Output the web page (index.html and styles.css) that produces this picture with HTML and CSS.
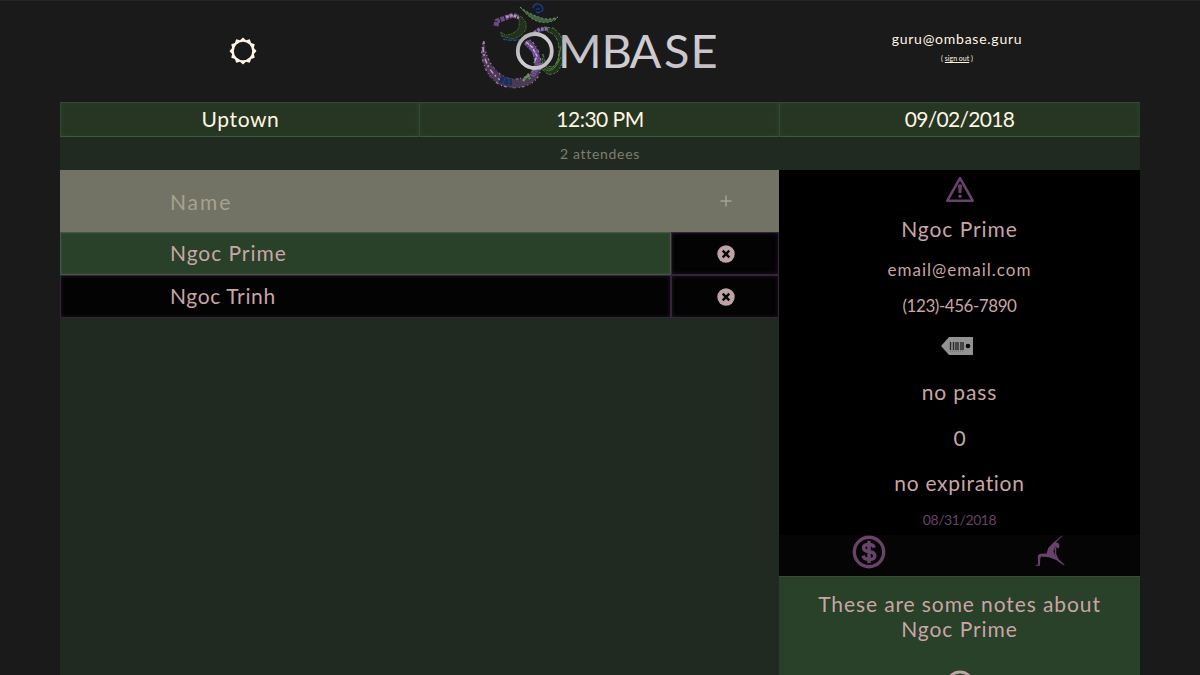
FILE: index.html
```html
<!DOCTYPE html>
<html lang="en">
<head>
<meta charset="utf-8">
<title>Ombase</title>
<link rel="stylesheet" href="styles.css">
</head>
<body>
<header class="top">
  <div class="settings">
    <svg width="28" height="28" viewBox="0 0 28 28"><g fill="#fff5e3"><path d="M14 .5 17 3.2 20.8 2.3 22.1 5.9 25.7 7.2 24.9 11 27.5 14 24.9 17 25.7 20.8 22.1 22.1 20.8 25.7 17 24.8 14 27.5 11 24.8 7.2 25.7 5.9 22.1 2.3 20.8 3.1 17 .5 14 3.1 11 2.3 7.2 5.9 5.9 7.2 2.3 11 3.2Z"/></g><circle cx="14" cy="14" r="9.2" fill="#1a1a1a"/></svg>
  </div>
  <div class="brand">
    <svg width="240" height="92" viewBox="480 0 240 92">
      <defs>
        <linearGradient id="metal" x1="0" y1="0" x2="1" y2="1"><stop offset="0" stop-color="#aaa8ac"/><stop offset=".5" stop-color="#d3d0d5"/><stop offset="1" stop-color="#bcb8c0"/></linearGradient>
        <g id="bowl"><path d="M484 41Q485 53 489 60Q495 73 507 78Q519 81 529 75Q537 69 535 60Q533 48 524 42L531 40Q540 50 541 62Q542 78 530 84Q516 91 500 85Q484 75 482 55Q481 47 484 41Z"/></g>
        <g id="loop"><path d="M517 15L522 17L526 23L526 29Q522 37 512 39L501 36L501 32L505 35Q513 35 518 29Q521 22 517 15Z"/></g>
        <g id="tail"><path d="M544 27L553 28Q564 35 564 51Q564 64 557 72Q547 78 542 68L543 54L545 61Q549 70 555 65Q561 55 558 42Q555 33 548 32Z"/></g>
      </defs>
      <g fill="#6b5079" opacity=".6"><use href="#bowl"/></g>
      <g fill="none" stroke-width="1.2">
        <g stroke="#a57fa9" stroke-dasharray="3 2 1 3"><use href="#bowl"/></g>
        <g stroke="#2f2345" stroke-dasharray="2 5 1 3" stroke-dashoffset="2"><use href="#bowl"/></g>
      </g>
      <g fill="#24371f" opacity=".8"><use href="#loop"/><use href="#tail"/></g>
      <g fill="none" stroke-width=".9">
        <g stroke="#5b9140" stroke-dasharray="3 1 2 2"><use href="#tail"/></g>
        <g stroke="#507c35" stroke-dasharray="2 1 1 1"><use href="#loop"/></g>
      </g>
      <path d="M483 47Q484 67 500 80" fill="none" stroke="#c18fc1" stroke-width="1.6" stroke-dasharray="5 2 2 3"/>
      <path d="M496 26 497 21 505 18 513 15 518 17" fill="none" stroke="#6d4a82" stroke-width="5" stroke-dasharray="4 1 3 1"/>
      <path d="M506 17 513 15 519 18" fill="none" stroke="#ae94bf" stroke-width="2.5" stroke-dasharray="3 1"/>
      <path d="M503 39Q519 43 535 34L546 29" fill="none" stroke="#234779" stroke-width="1.6" stroke-dasharray="4 1"/>
      <path d="M534 33 540 29 548 29" fill="none" stroke="#8e6cab" stroke-width="3.6" stroke-dasharray="3 1"/>
      <path d="M526 42 535 51 538 64 532 76" fill="none" stroke="#725095" stroke-width="6" stroke-dasharray="3 .6 2 .7"/>
      <path d="M526 42 532 47 537 56 534 63" fill="none" stroke="#cbb3d3" stroke-width="1.3" stroke-dasharray="4 1"/>
      <path d="M500 79 508 82 512 82" fill="none" stroke="#172f5d" stroke-width="7" stroke-dasharray="4 1"/>
      <path d="M490 66 499 76M512 83 519 81 531 79" fill="none" stroke="#4a345c" stroke-width="3" stroke-dasharray="1.5 2"/>
      <path d="M523 81 528 75 530 79M532 70 537 67 541 70" fill="none" stroke="#66985a" stroke-width="2.4" stroke-dasharray="3 .6"/>
      <path d="M520 7Q529 14 539 17Q547 21 558 17L555 20Q543 26 531 18Q525 13 520 7Z" fill="#3f6240" stroke="#87a681" stroke-width=".8" stroke-dasharray="2 2"/>
      <circle cx="538" cy="9" r="5.3" fill="#101b38"/>
      <path d="M533 8Q534 3.5 538 4Q543 5 543 10Q540 14 536 12M536 9H540" fill="none" stroke="#244379" stroke-width="1.2"/>
      <path d="M545 65Q550 75 558 61L561 46M544 69Q553 76 561 57" fill="none" stroke="#5e963f" stroke-width=".7"/>
      <circle cx="534.8" cy="51" r="17" fill="none" stroke="url(#metal)" stroke-width="3.8"/>
      <text class="wordmark" x="558 601.5 629.5 664 690.5" y="68" fill="url(#metal)">MBASE</text>
    </svg>
  </div>
  <div class="account"><div class="user">guru@ombase.guru</div><div class="signout">( <a>sign out</a> )</div></div>
</header>
<main class="board">
  <div class="session"><div><span class="place">Uptown</span></div><div><span class="time">12:30 PM</span></div><div><span class="date">09/02/2018</span></div></div>
  <div class="count">2 attendees</div>
  <div class="content">
    <section class="list">
      <div class="row search"><div class="name"><span class="label">Name</span></div><div class="action"><svg width="12" height="12" viewBox="0 0 12 12"><path d="M6 .5V11.5M.5 6H11.5" stroke="#a4a38f" stroke-width="1.5"/></svg></div></div>
      <div class="row person active"><div class="name"><span class="prime">Ngoc Prime</span></div><div class="action"><svg width="18" height="18" viewBox="0 0 18 18"><circle cx="9" cy="9" r="8.7" fill="#bda3a5"/><path d="M5.7 5.7 12.3 12.3M12.3 5.7 5.7 12.3" stroke="#050505" stroke-width="2.4"/></svg></div></div>
      <div class="row person"><div class="name"><span class="trinh">Ngoc Trinh</span></div><div class="action"><svg width="18" height="18" viewBox="0 0 18 18"><circle cx="9" cy="9" r="8.7" fill="#bda3a5"/><path d="M5.7 5.7 12.3 12.3M12.3 5.7 5.7 12.3" stroke="#050505" stroke-width="2.4"/></svg></div></div>
    </section>
    <aside class="detail">
      <div class="profile">
        <div class="warning"><svg width="30" height="27" viewBox="0 0 30 27"><path d="M15 2.2 27.7 24.7H2.3Z" fill="none" stroke="#684269" stroke-width="2.6" stroke-linejoin="round"/><path d="M13 9Q15 7.5 17 9L16.4 17H13.6Z" fill="#684269"/><circle cx="15" cy="20.2" r="1.8" fill="#684269"/></svg></div>
        <div class="line fullname"><span class="prime">Ngoc Prime</span></div>
        <div class="line email"><span>email@email.com</span></div>
        <div class="line phone"><span>(123)-456-7890</span></div>
        <div class="tag"><svg width="32" height="18" viewBox="0 0 32 18"><path d="M0 9 8 0H32V18H8Z" fill="#929292"/><path d="M9.5 5V13M12.5 5V13M15 5V13M17 5V13M20 5V13M22 5V13" stroke="#292929" stroke-width="1.4"/><path d="M9 14H22" stroke="#666" stroke-dasharray="1 1"/><circle cx="27" cy="9" r="2.3" fill="#080808"/></svg></div>
        <div class="line pass"><span>no pass</span></div>
        <div class="line zero"><span>0</span></div>
        <div class="line expiry"><span>no expiration</span></div>
        <div class="line visited"><span>08/31/2018</span></div>
      </div>
      <div class="tools">
        <div><svg width="34" height="34" viewBox="0 0 34 34"><circle cx="17" cy="17" r="14.7" fill="none" stroke="#684269" stroke-width="3.4"/><path d="M22.3 12.6Q21.5 9.5 17 9.5C9.8 9.5 9.8 15.5 17 16.6C25 17.8 24.5 24.5 17 24.5Q11.9 24.5 11.1 20.7M17 5.8V28.2" fill="none" stroke="#684269" stroke-width="3.5"/></svg></div>
        <div><svg width="30" height="32" viewBox="0 0 30 32"><path d="M27 .5 27.5 1 20.8 7.3 23.4 8 24.5 10.8 23.6 13.4 21.8 12.7 20.5 11.5 18.3 16.4 20.8 21.5 29.5 29.5 29 30.5 20.8 24.7 14 22.3 6.2 21.5 5.3 23.2 4.9 30.7H.7V30L3.1 29.4 2.8 20.4 5.2 18.8 11.6 18.6 13.2 13.1 18.2 7.8Z" fill="#684269"/><path d="M20.5 12.5 20.5 19 22.5 24" fill="none" stroke="#684269" stroke-width="1.5"/></svg></div>
      </div>
      <div class="notes"><div><span class="message">These are some notes about</span></div><div><span class="prime">Ngoc Prime</span></div><svg class="notes-action" width="30" height="30" viewBox="0 0 30 30"><circle cx="15" cy="15" r="13" fill="none" stroke="#bda3a5" stroke-width="3"/></svg></div>
    </aside>
  </div>
</main>
</body>
</html>
```
FILE: styles.css
```css
* { box-sizing: border-box; }
html, body { height: 100%; overflow: hidden; }
body {
  margin: 0;
  padding: 0 60px;
  background: #1a1a1a;
  border-top: 1px solid #252525;
  color: #c8a5a6;
  font: 400 21px/25px "Century Gothic", Lato, sans-serif;
}
svg { display: block; flex: none; }
span { white-space: nowrap; }
.top { height: 101px; display: grid; grid-template-columns: 366px 348px 366px; }
.settings { display: flex; justify-content: center; padding-top: 36px; }
.brand { display: flex; justify-content: center; margin-top: -1px; }
.wordmark { font: 400 47px Lato, sans-serif; }
.account { color: #fff5e3; text-align: center; padding-top: 28px; }
.user { font-size: 14px; line-height: 20px; letter-spacing: .75px; }
.signout { font-size: 7px; line-height: 18px; }
.signout a { text-decoration: underline; }
.board { height: 573px; background: #212a20; }
.session { display: grid; grid-template-columns: 359px 360px 361px; height: 35px; background: #263623; color: #fff5e3; }
.session div { display: flex; align-items: center; justify-content: center; padding: 0 0 2px 2px; border: 1px solid #34472f; border-bottom-color: #405640; border-right-color: #293f2a; box-shadow: inset 0 0 4px #29452b; }
.session div:last-child { padding-left: 0; }
.count { height: 33px; text-align: center; font-size: 14px; line-height: 33px; color: #7d7d70; letter-spacing: .7px; }
.content { display: grid; grid-template-columns: 719px 361px; height: 505px; }
.row { display: grid; grid-template-columns: 611px 108px; }
.row > div { display: flex; align-items: center; }
.name { padding-left: 110px; }
.action { justify-content: center; padding-left: 1px; }
.search { height: 62px; background: #727365; color: #a7a28e; }
.person { height: 43px; }
.person .name { padding: 0 0 2px 109px; }
.person > div { background: #030303; border: 1px solid #35233a; box-shadow: inset 0 0 4px #231527; }
.person.active .name { background: #294029; border-color: #465746; box-shadow: inset 0 0 3px #3d4f3d; }
.detail { background: #000; }
.profile { height: 365px; display: flex; flex-direction: column; align-items: center; padding-top: 6px; }
.warning { height: 27px; }
.line { display: flex; align-items: center; justify-content: center; }
.fullname { height: 51px; }
.email { height: 31px; font-size: 17px; letter-spacing: 1px; }
.phone { height: 41px; font-size: 17px; letter-spacing: -.45px; }
.tag { height: 36px; padding-top: 11px; margin-left: -6px; }
.pass { height: 59px; letter-spacing: .9px; }
.zero { height: 32px; }
.expiry { height: 59px; letter-spacing: .7px; }
.visited { height: 15px; font-size: 14px; color: #684269; letter-spacing: -.4px; }
.tools { height: 41px; display: grid; grid-template-columns: 1fr 1fr; justify-items: center; background: #050505; }
.tools div + div { padding-left: 1px; }
.notes { height: 99px; padding-top: 14px; display: flex; flex-direction: column; align-items: center; background: #294029; border-top: 1px solid #354e35; overflow: hidden; }
.notes-action { margin-top: 29px; }
.place { letter-spacing: .6px; }
.time { letter-spacing: -.5px; }
.date { letter-spacing: -.7px; }
.label { letter-spacing: 1.9px; }
.prime { letter-spacing: .95px; }
.trinh { letter-spacing: .65px; }
.message { letter-spacing: .9px; }
```
